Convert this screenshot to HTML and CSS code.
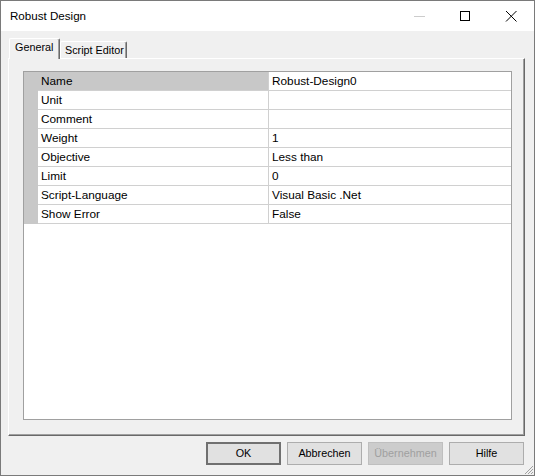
FILE: index.html
```html
<!DOCTYPE html>
<html>
<head>
<meta charset="utf-8">
<link rel="stylesheet" href="styles.css">
</head>
<body>
<div class="window">
  <div class="titlebar">
    <div class="title">Robust Design</div>
    <div class="caption-btn">
      <svg width="46" height="30" viewBox="0 0 46 30"><line x1="18" y1="15.5" x2="29" y2="15.5" stroke="#cccccc" stroke-width="1"/></svg>
    </div>
    <div class="caption-btn">
      <svg width="46" height="30" viewBox="0 0 46 30"><rect x="18.5" y="10.5" width="9" height="9" fill="none" stroke="#000" stroke-width="1"/></svg>
    </div>
    <div class="caption-btn">
      <svg width="46" height="30" viewBox="0 0 46 30"><path d="M18 10 L28.5 20.5 M28.5 10 L18 20.5" stroke="#000" stroke-width="1" fill="none"/></svg>
    </div>
  </div>
  <div class="client">
    <div class="tabs">
      <div class="tab active">General</div>
      <div class="tab">Script Editor</div>
    </div>
    <div class="panel">
      <div class="grid">
        <div class="row selected"><div class="gutter"></div><div class="label">Name</div><div class="value">Robust-Design0</div></div>
        <div class="row"><div class="gutter"></div><div class="label">Unit</div><div class="value"></div></div>
        <div class="row"><div class="gutter"></div><div class="label">Comment</div><div class="value"></div></div>
        <div class="row"><div class="gutter"></div><div class="label">Weight</div><div class="value">1</div></div>
        <div class="row"><div class="gutter"></div><div class="label">Objective</div><div class="value">Less than</div></div>
        <div class="row"><div class="gutter"></div><div class="label">Limit</div><div class="value">0</div></div>
        <div class="row"><div class="gutter"></div><div class="label">Script-Language</div><div class="value">Visual Basic .Net</div></div>
        <div class="row"><div class="gutter"></div><div class="label">Show Error</div><div class="value">False</div></div>
      </div>
    </div>
    <div class="buttons">
      <div class="btn default">OK</div>
      <div class="btn">Abbrechen</div>
      <div class="btn disabled">Übernehmen</div>
      <div class="btn">Hilfe</div>
    </div>
  </div>
  <svg class="grip" width="10" height="10" viewBox="0 0 10 10">
    <path d="M9 1 L1 9 M9 4 L4 9 M9 7 L7 9" stroke="#a0a0a0" stroke-width="1" fill="none"/>
  </svg>
</div>
</body>
</html>
```
FILE: styles.css
```css
html, body {
  margin: 0;
  padding: 0;
  background: #f0f0f0;
}
body {
  width: 535px;
  height: 476px;
  overflow: hidden;
  font-family: "Liberation Sans", Arial, sans-serif;
  color: #000;
}
.window {
  position: relative;
  box-sizing: border-box;
  width: 535px;
  height: 476px;
  border: 1px solid #7a7a7a;
  display: flex;
  flex-direction: column;
  background: #f0f0f0;
}
.titlebar {
  height: 30px;
  background: #fff;
  display: flex;
  align-items: center;
  flex: none;
}
.title {
  flex: 1;
  padding-left: 9px;
  font-size: 11.6px;
  line-height: 30px;
}
.caption-btn {
  width: 46px;
  height: 30px;
  display: flex;
}
.client {
  flex: 1;
  display: flex;
  flex-direction: column;
}
.tabs {
  display: flex;
  align-items: flex-end;
  height: 20px;
  margin-top: 7px;
  padding-left: 8px;
  position: relative;
  z-index: 1;
}
.tab {
  box-sizing: border-box;
  height: 17px;
  width: 67px;
  border-left: 1px solid #fff;
  border-top: 1px solid #fff;
  border-right: 1px solid #696969;
  box-shadow: inset -1px 0 #a0a0a0;
  font-size: 10.8px;
  line-height: 16px;
  padding-left: 4px;
  border-top-left-radius: 2px;
  border-top-right-radius: 2px;
}
.tab.active {
  height: 21px;
  width: 51px;
  margin-bottom: -1px;
  background: #f0f0f0;
  padding-left: 5px;
  line-height: 17px;
}
.panel {
  box-sizing: border-box;
  width: 517px;
  height: 378px;
  margin-left: 7px;
  border-top: 1px solid #fff;
  border-left: 1px solid #fff;
  border-right: 1px solid #696969;
  border-bottom: 1px solid #696969;
  box-shadow: inset -1px -1px #a0a0a0;
  padding: 12px 0 0 14px;
}
.grid {
  box-sizing: border-box;
  width: 489px;
  height: 349px;
  border: 1px solid #a0a0a0;
  background: #fff;
}
.row {
  display: grid;
  grid-template-columns: 14px 231px 1fr;
  height: 19px;
  font-size: 11.8px;
}
.gutter {
  background: #c8c8c8;
}
.label, .value {
  box-sizing: border-box;
  height: 19px;
  line-height: 18px;
  padding-left: 3px;
  border-bottom: 1px solid #d0d0d0;
  white-space: nowrap;
}
.label {
  border-right: 1px solid #d0d0d0;
}
.row.selected .label {
  background: #c8c8c8;
}
.buttons {
  display: flex;
  justify-content: flex-end;
  gap: 6px;
  margin-top: 6px;
  padding-right: 10px;
}
.btn {
  box-sizing: border-box;
  width: 75px;
  height: 23px;
  background: #e1e1e1;
  border: 1px solid #adadad;
  font-size: 10.8px;
  line-height: 21px;
  text-align: center;
}
.btn.default {
  border: 2px solid #707070;
  line-height: 19px;
}
.btn.disabled {
  background: #cccccc;
  border-color: #bfbfbf;
  color: #a0a0a0;
}
.grip {
  position: absolute;
  right: 0;
  bottom: 0;
}
```
